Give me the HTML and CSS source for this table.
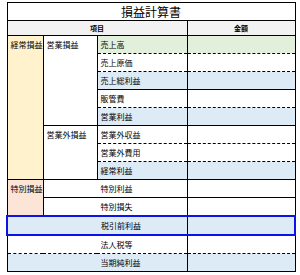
FILE: index.html
```html
<!DOCTYPE html>
<html lang="ja">
<head>
<meta charset="utf-8">
<link rel="stylesheet" href="styles.css">
</head>
<body>
<div class="wrap">
<table class="pl">
  <colgroup>
    <col class="c1"><col class="c2"><col class="c3"><col class="c4">
  </colgroup>
  <tr class="title"><td colspan="4">損益計算書</td></tr>
  <tr class="head"><td colspan="3">項目</td><td>金額</td></tr>
  <tr>
    <td rowspan="8" class="grp yellow">経常損益</td>
    <td rowspan="5" class="sub">営業損益</td>
    <td class="green">売上高</td><td class="green"></td>
  </tr>
  <tr class="d"><td>売上原価</td><td></td></tr>
  <tr class="d"><td class="blue">売上総利益</td><td class="blue"></td></tr>
  <tr><td>販管費</td><td></td></tr>
  <tr class="d"><td class="blue">営業利益</td><td class="blue"></td></tr>
  <tr>
    <td rowspan="3" class="sub">営業外損益</td>
    <td>営業外収益</td><td></td>
  </tr>
  <tr class="d"><td>営業外費用</td><td></td></tr>
  <tr class="d"><td class="blue">経常利益</td><td class="blue"></td></tr>
  <tr>
    <td rowspan="2" class="grp pink">特別損益</td>
    <td colspan="2" class="span2">特別利益</td><td></td>
  </tr>
  <tr><td colspan="2" class="span2">特別損失</td><td></td></tr>
  <tr class="hl"><td colspan="3" class="span3 blue">税引前利益</td><td class="blue"></td></tr>
  <tr><td colspan="3" class="span3">法人税等</td><td></td></tr>
  <tr class="d"><td colspan="3" class="span3 blue">当期純利益</td><td class="blue"></td></tr>
</table>
</div>
</body>
</html>
```

FILE: styles.css
```css
html, body {
  margin: 0;
  padding: 0;
  background: #fff;
}
.wrap {
  padding: 2px 6px 0 6px;
}
.pl {
  border-collapse: collapse;
  table-layout: fixed;
  width: 288px;
  border: 1px solid #000;
  font-family: "Noto Sans CJK JP", "Noto Sans", sans-serif;
  font-size: 8px;
  color: #000;
}
.c1 { width: 36px; }
.c2 { width: 54px; }
.c3 { width: 90px; }
.c4 { width: 108px; }
.pl td {
  border-left: 1px solid #000;
  border-right: 1px solid #000;
  border-top: 1px solid #000;
  border-bottom: none;
  padding: 0 3px;
  height: 17px;
  line-height: 17px;
  vertical-align: middle;
  white-space: nowrap;
  overflow: hidden;
}
.pl tr.d td {
  border-top: 1px dashed #000;
}
.pl tr.title td {
  height: 17px;
  line-height: 17px;
  text-align: center;
  font-size: 12px;
  color: #000;
  background: #fff;
}
.pl tr.head td {
  height: 14px;
  line-height: 14px;
  text-align: center;
  font-weight: bold;
  font-size: 7px;
  background: #f2f2f2;
  color: #000;
}
.pl td.grp,
.pl td.sub {
  vertical-align: top;
}
.pl td.span2 { padding-left: 57px; }
.pl td.span3 { padding-left: 93px; }
.yellow { background: #fff2cc; }
.pink { background: #fce4d6; }
.green { background: #e2efda; }
.blue { background: #ddebf7; }
.pl tr.hl td {
  border-top: 2px solid #0a14e6;
  border-bottom: 2px solid #0a14e6;
}
.pl tr.hl td:first-child { border-left: 2px solid #0a14e6; }
.pl tr.hl td:last-child { border-right: 2px solid #0a14e6; }
```
